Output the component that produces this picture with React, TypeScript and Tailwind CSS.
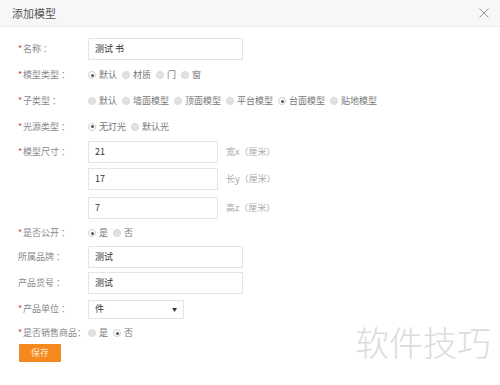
import React from "react";

const font = { fontFamily: '"Noto Sans CJK SC", "Noto Sans", sans-serif' };

function Radio({ label, checked }: { label: string; checked?: boolean }) {
  return (
    <div className="flex items-center mr-[5px]">
      {checked ? (
        <span className="w-[8px] h-[8px] rounded-full border border-[#cfcfcf] bg-white flex items-center justify-center">
          <span className="w-[3px] h-[3px] rounded-full bg-[#555]" />
        </span>
      ) : (
        <span className="w-[8px] h-[8px] rounded-full bg-[#e2e2e2] border border-[#d8d8d8]" />
      )}
      <span className="ml-[3px] text-[9px] text-[#777]">{label}</span>
    </div>
  );
}

function Label({ text, req = true }: { text: string; req?: boolean }) {
  return (
    <div className="w-[70px] shrink-0 flex items-center text-[9px] text-[#888] whitespace-nowrap">
      {req ? <span className="text-[#e4393c] w-[5px]">*</span> : null}
      <span>{text}</span>
    </div>
  );
}

function Input({ value, w }: { value: string; w: string }) {
  return (
    <div className={`${w} h-[22px] border border-[#e4e4e4] bg-white flex items-center px-[6px] text-[9px] text-[#333]`}>
      {value}
    </div>
  );
}

export default function App() {
  return (
    <div className="w-[500px] h-[385px] bg-white relative overflow-hidden" style={font}>
      <div className="h-[27px] bg-[#f7f7f7] border-b border-[#ededed] flex items-center justify-between pl-[12px] pr-[11px]">
        <span className="text-[11px] text-[#555]">添加模型</span>
        <svg width="10" height="10" viewBox="0 0 10 10">
          <path d="M0.5 0.5 L9.5 9.5 M9.5 0.5 L0.5 9.5" stroke="#999" strokeWidth="1" />
        </svg>
      </div>
      <div className="pl-[18px] pt-[9px] flex flex-col">
        <div className="h-[26px] flex items-center">
          <Label text="名称 ：" />
          <Input value="测试  书" w="w-[155px]" />
        </div>
        <div className="h-[26px] flex items-center">
          <Label text="模型类型 ：" />
          <Radio label="默认" checked />
          <Radio label="材质" />
          <Radio label="门" />
          <Radio label="窗" />
        </div>
        <div className="h-[26px] flex items-center">
          <Label text="子类型 ：" />
          <Radio label="默认" />
          <Radio label="墙面模型" />
          <Radio label="顶面模型" />
          <Radio label="平台模型" />
          <Radio label="台面模型" checked />
          <Radio label="贴地模型" />
        </div>
        <div className="h-[25px] flex items-center">
          <Label text="光源类型 ：" />
          <Radio label="无灯光" checked />
          <Radio label="默认光" />
        </div>
        <div className="h-[25px] flex items-center">
          <Label text="模型尺寸 ：" />
          <Input value="21" w="w-[130px]" />
          <span className="ml-[8px] text-[9px] text-[#aaa]">宽x（厘米）</span>
        </div>
        <div className="h-[30px] flex items-center">
          <Label text="" req={false} />
          <Input value="17" w="w-[130px]" />
          <span className="ml-[8px] text-[9px] text-[#aaa]">长y（厘米）</span>
        </div>
        <div className="h-[28px] flex items-center">
          <Label text="" req={false} />
          <Input value="7" w="w-[130px]" />
          <span className="ml-[8px] text-[9px] text-[#aaa]">高z（厘米）</span>
        </div>
        <div className="h-[22px] flex items-center">
          <Label text="是否公开 ：" />
          <Radio label="是" checked />
          <Radio label="否" />
        </div>
        <div className="h-[26px] flex items-center">
          <Label text="所属品牌 ：" req={false} />
          <Input value="测试" w="w-[155px]" />
        </div>
        <div className="h-[26px] flex items-center">
          <Label text="产品货号 ：" req={false} />
          <Input value="测试" w="w-[155px]" />
        </div>
        <div className="h-[26px] flex items-center">
          <Label text="产品单位 ：" />
          <div className="w-[96px] h-[19px] border border-[#e4e4e4] bg-white flex items-center justify-between px-[6px] text-[9px] text-[#333]">
            <span>件</span>
            <span className="text-[5px] text-[#333]">▼</span>
          </div>
        </div>
        <div className="h-[22px] flex items-center">
          <Label text="是否销售商品：" />
          <Radio label="是" />
          <Radio label="否" checked />
        </div>
        <div className="h-[18px] flex">
          <div className="ml-[1px] w-[42px] h-[18px] bg-[#f5891e] text-[#fde6cf] text-[9px] flex items-center justify-center rounded-[1px]">
            保存
          </div>
        </div>
      </div>
      <div className="absolute left-[355px] top-[325px] text-[34px] leading-none text-[#dcdcdc] font-light whitespace-nowrap">
        软件技巧
      </div>
    </div>
  );
}
